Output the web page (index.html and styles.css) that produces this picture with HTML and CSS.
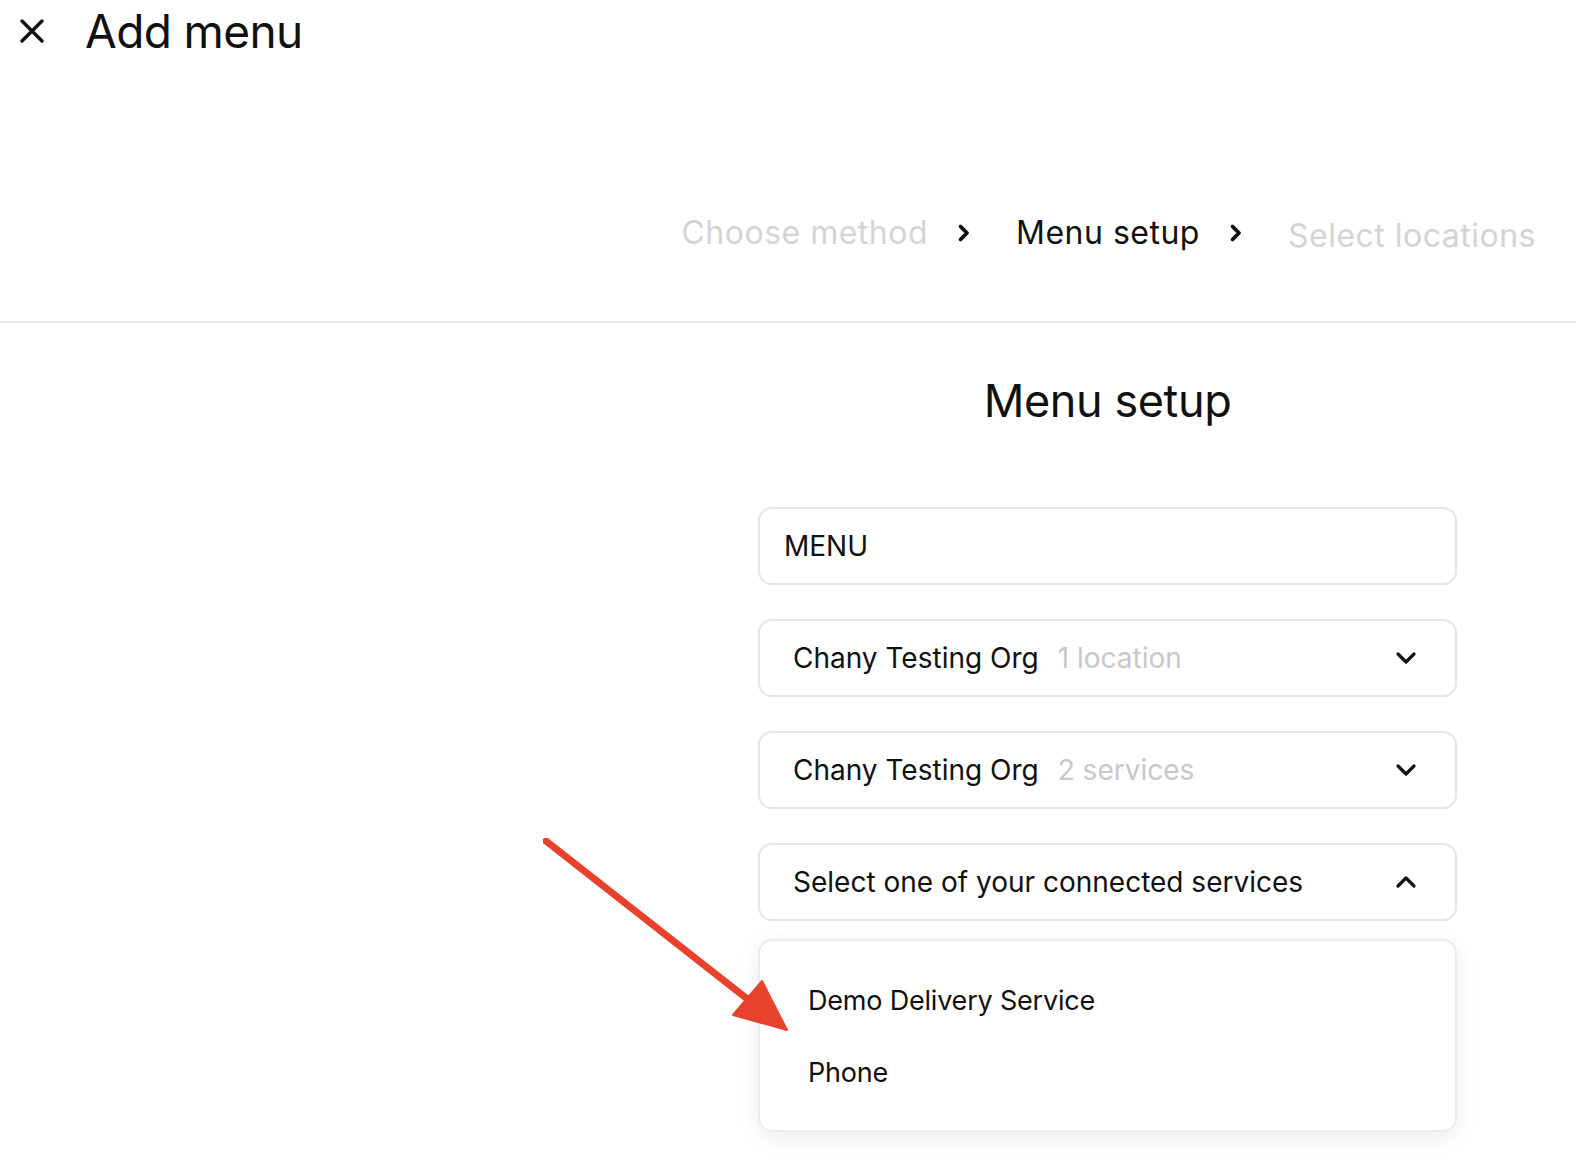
FILE: index.html
```html
<!DOCTYPE html>
<html>
<head>
<meta charset="utf-8">
<link rel="stylesheet" href="styles.css">
</head>
<body>
<header class="topbar">
  <svg class="close" width="26" height="26" viewBox="0 0 26 26"><path d="M3 3L23 23M23 3L3 23" stroke="#111" stroke-width="3.4" stroke-linecap="round"/></svg>
  <h1 class="title">Add menu</h1>
</header>
<nav class="steps">
  <span class="step muted">Choose method</span>
  <svg class="chev" width="14" height="20" viewBox="0 0 14 20"><path d="M3.5 3.5L10 10L3.5 16.5" fill="none" stroke="#111" stroke-width="3.8" stroke-linecap="round" stroke-linejoin="round"/></svg>
  <span class="step active">Menu setup</span>
  <svg class="chev" width="14" height="20" viewBox="0 0 14 20"><path d="M3.5 3.5L10 10L3.5 16.5" fill="none" stroke="#111" stroke-width="3.8" stroke-linecap="round" stroke-linejoin="round"/></svg>
  <span class="step muted low">Select locations</span>
</nav>
<main class="main">
  <div class="form">
    <h2 class="heading">Menu setup</h2>
    <div class="field input"><span>MENU</span></div>
    <div class="field select"><span class="label">Chany Testing Org<span class="sub">1 location</span></span>
      <svg class="caret" width="22" height="14" viewBox="0 0 22 14"><path d="M3 3L11 11L19 3" fill="none" stroke="#111" stroke-width="3.2" stroke-linecap="round" stroke-linejoin="round"/></svg></div>
    <div class="field select"><span class="label">Chany Testing Org<span class="sub">2 services</span></span>
      <svg class="caret" width="22" height="14" viewBox="0 0 22 14"><path d="M3 3L11 11L19 3" fill="none" stroke="#111" stroke-width="3.2" stroke-linecap="round" stroke-linejoin="round"/></svg></div>
    <div class="field select open"><span class="label">Select one of your connected services</span>
      <svg class="caret" width="22" height="14" viewBox="0 0 22 14"><path d="M3 11L11 3L19 11" fill="none" stroke="#111" stroke-width="3.2" stroke-linecap="round" stroke-linejoin="round"/></svg></div>
    <ul class="menu">
      <li>Demo Delivery Service</li>
      <li>Phone</li>
    </ul>
  </div>
</main>
<svg class="arrow" width="260" height="200" viewBox="0 0 260 200">
  <path d="M3 3L212 167" stroke="#e8412c" stroke-width="7" stroke-linecap="round"/>
  <path d="M244 192L190 177L219 143Z" fill="#e8412c" stroke="#e8412c" stroke-width="2" stroke-linejoin="round"/>
</svg>
</body>
</html>
```
FILE: styles.css
```css
* { box-sizing: border-box; }
html, body { margin: 0; padding: 0; background: #fff; }
body {
  font-family: Inter, "Noto Sans", sans-serif;
  color: #111;
  width: 1576px;
  height: 1166px;
  overflow: hidden;
  position: relative;
}
.topbar {
  display: flex;
  align-items: center;
  height: 62px;
  padding-left: 19px;
}
.close { display: block; }
.title {
  margin: 0 0 0 40px;
  font-size: 46px;
  font-weight: 400;
  letter-spacing: -0.6px;
  line-height: 1;
}
.steps {
  display: flex;
  justify-content: flex-end;
  align-items: center;
  padding-right: 40px;
  padding-top: 82px;
  height: 261px;
  border-bottom: 2px solid #e8e8e8;
}
.step {
  font-size: 32px;
  line-height: 1;
  letter-spacing: 0.5px;
}
.step.muted { color: #d4d4d4; }
.step.low { position: relative; top: 3px; }
.chev { margin: 0 45px 0 29px; }
.main {
  display: flex;
  padding-left: 758px;
}
.form {
  width: 699px;
  display: flex;
  flex-direction: column;
}
.heading {
  margin: 50px 0 78px;
  text-align: center;
  font-size: 45px;
  font-weight: 400;
  line-height: 56px;
  letter-spacing: -0.4px;
}
.field {
  height: 78px;
  border: 2px solid #e6e6e6;
  border-radius: 14px;
  display: flex;
  align-items: center;
  font-size: 28px;
  margin-bottom: 34px;
}
.input { padding-left: 24px; }
.select { padding: 0 38px 0 33px; justify-content: space-between; }
.select.open { margin-bottom: 18px; }
.sub { color: #c8c8c8; margin-left: 19px; }
.caret { display: block; }
.menu {
  list-style: none;
  margin: 0;
  padding: 23px 0 22px 48px;
  border: 2px solid #ececec;
  border-radius: 14px;
  box-shadow: 0 6px 22px rgba(0,0,0,0.08);
  font-size: 27px;
  letter-spacing: -0.2px;
}
.menu li { height: 72px; display: flex; align-items: center; }
.arrow { position: absolute; left: 543px; top: 838px; }
```
